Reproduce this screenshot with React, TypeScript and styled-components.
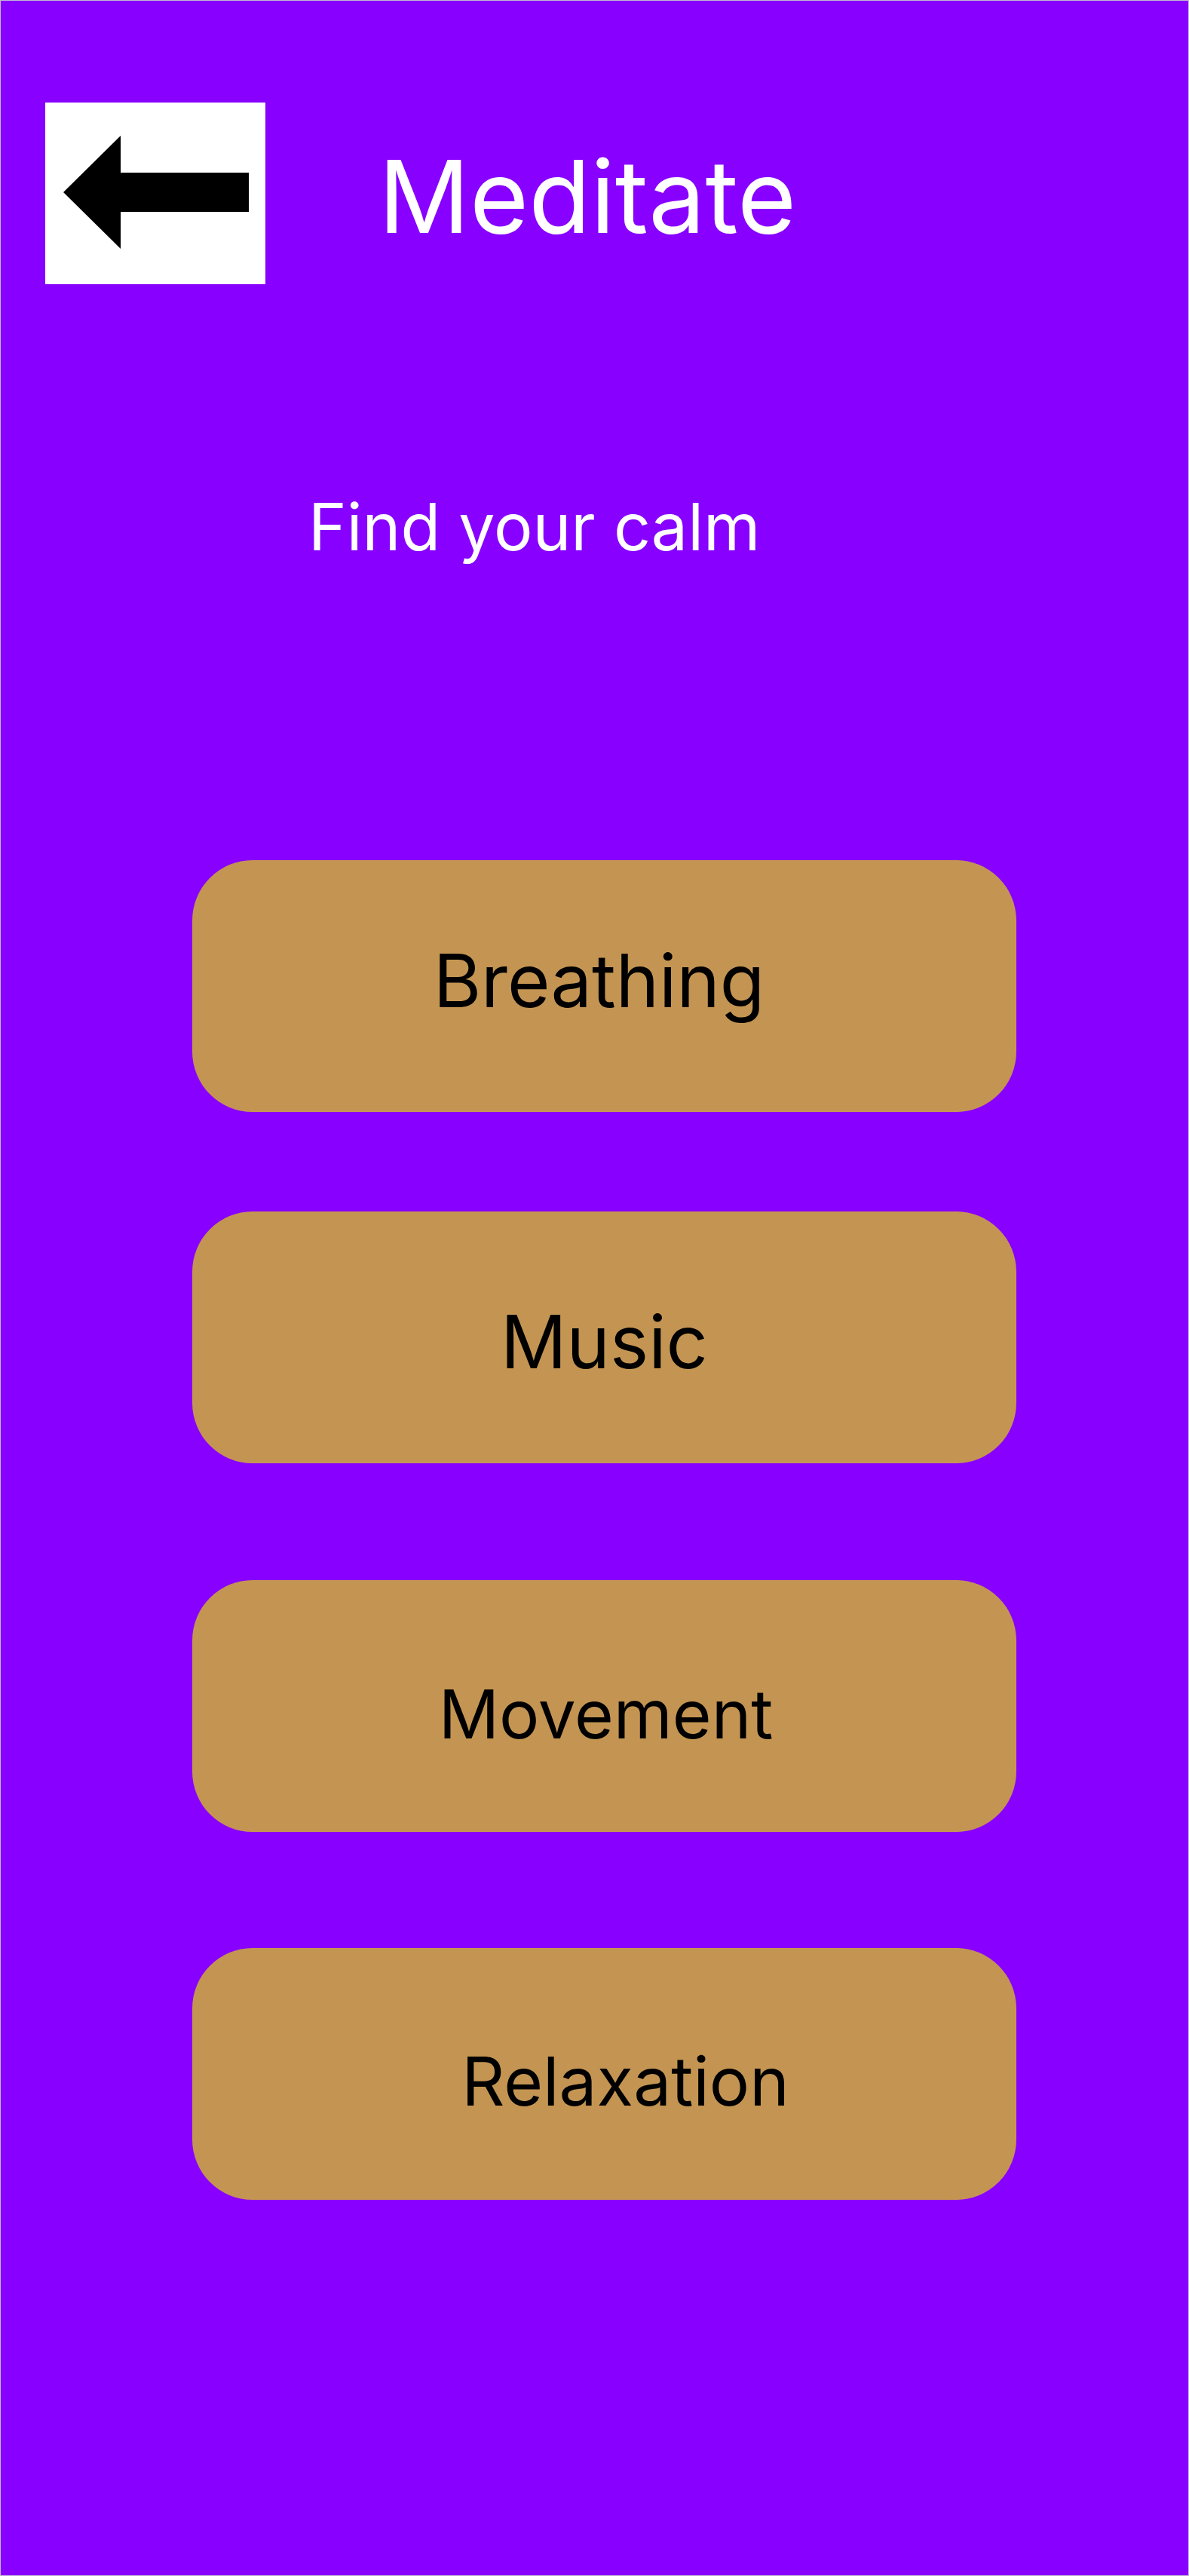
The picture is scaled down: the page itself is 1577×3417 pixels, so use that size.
import React from "react";
import styled, { createGlobalStyle } from "styled-components";

const GlobalStyle = createGlobalStyle`
  html, body {
    margin: 0;
    padding: 0;
    background: #8800ff;
  }
  * { box-sizing: border-box; }
`;

const Screen = styled.main`
  width: 1577px;
  min-height: 3417px;
  background: #8800ff;
  border: 1px solid #c4b8d2;
  font-family: Inter, "Noto Sans", sans-serif;
  display: flex;
  flex-direction: column;
  padding-top: 135px;
`;

const Header = styled.header`
  display: flex;
  align-items: flex-start;
  padding-left: 59px;
  gap: 150px;
`;

const BackButton = styled.button`
  width: 292px;
  height: 241px;
  background: #ffffff;
  border: none;
  padding: 0;
  margin: 0;
  display: block;
  cursor: pointer;
`;

const Title = styled.h1`
  margin: 57px 0 0;
  font-size: 134px;
  line-height: 1;
  font-weight: 400;
  color: #ffffff;
`;

const Subtitle = styled.p`
  margin: 279px 0 0 408px;
  font-size: 86px;
  line-height: 1;
  font-weight: 400;
  color: #ffffff;
`;

const Options = styled.nav`
  display: flex;
  flex-direction: column;
  margin: 399px 0 0 254px;
  width: 1093px;
`;

const OptionButton = styled.button<{ $gap: number; $size: number; $dx: number; $dy: number }>`
  height: 334px;
  width: 100%;
  margin-top: ${(p) => p.$gap}px;
  border: none;
  border-radius: 80px;
  background: #c49552;
  color: #000000;
  font-family: Inter, "Noto Sans", sans-serif;
  font-size: ${(p) => p.$size}px;
  line-height: 1;
  font-weight: 400;
  display: flex;
  align-items: center;
  justify-content: center;
  padding: ${(p) => (p.$dy > 0 ? p.$dy * 2 : 0)}px ${(p) => (p.$dx < 0 ? -p.$dx * 2 : 0)}px
    ${(p) => (p.$dy < 0 ? -p.$dy * 2 : 0)}px ${(p) => (p.$dx > 0 ? p.$dx * 2 : 0)}px;
  cursor: pointer;
`;

const BackArrow = () => (
  <svg width="292" height="241" viewBox="0 0 292 241" aria-hidden="true">
    <polygon points="24,119 100,44 100,93 270,93 270,145 100,145 100,194" fill="#000000" />
  </svg>
);

const options = [
  { label: "Breathing", gap: 0, size: 97, dx: -7, dy: -8 },
  { label: "Music", gap: 132, size: 97, dx: 0, dy: 5 },
  { label: "Movement", gap: 155, size: 89, dx: 2, dy: 10 },
  { label: "Relaxation", gap: 154, size: 89, dx: 28, dy: 9 },
];

export default function App() {
  return (
    <>
      <GlobalStyle />
      <Screen>
        <Header>
          <BackButton aria-label="Back">
            <BackArrow />
          </BackButton>
          <Title>Meditate</Title>
        </Header>
        <Subtitle>Find your calm</Subtitle>
        <Options>
          {options.map((o) => (
            <OptionButton key={o.label} $gap={o.gap} $size={o.size} $dx={o.dx} $dy={o.dy}>
              {o.label}
            </OptionButton>
          ))}
        </Options>
      </Screen>
    </>
  );
}
